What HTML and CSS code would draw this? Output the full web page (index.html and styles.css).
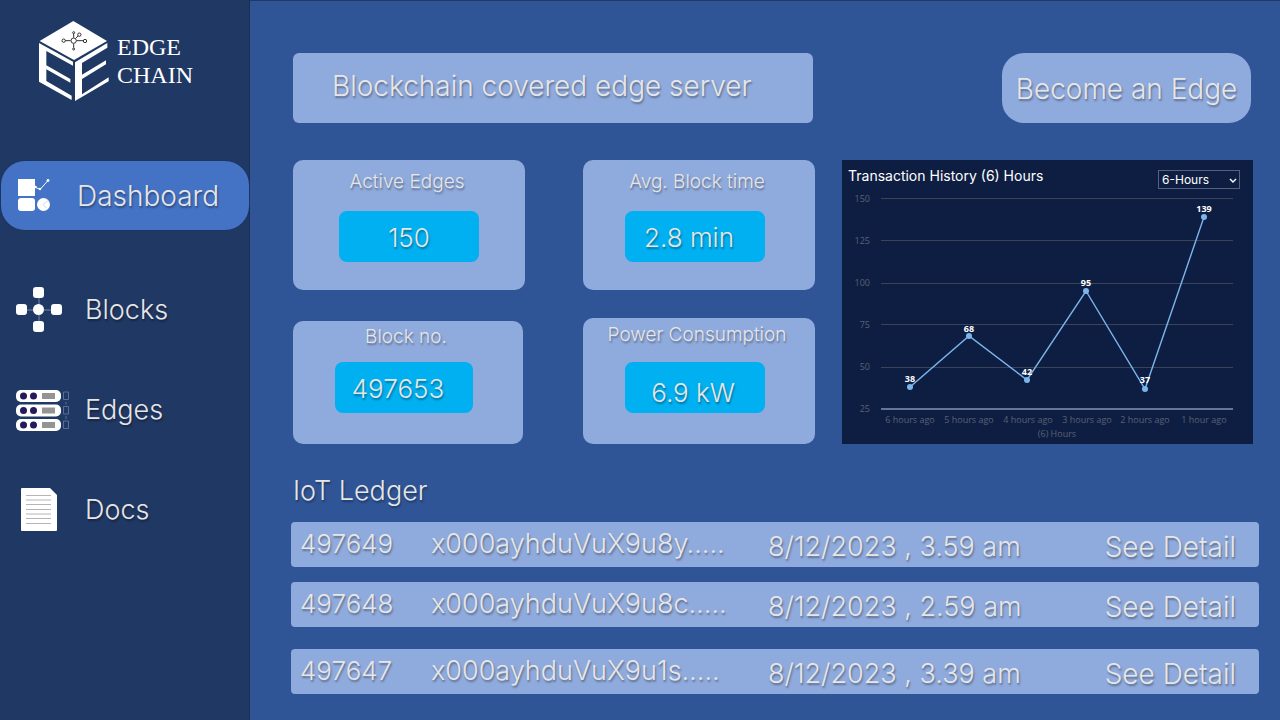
FILE: index.html
```html
<!DOCTYPE html>
<html lang="en">
<head>
<meta charset="utf-8">
<meta name="viewport" content="width=device-width, initial-scale=1">
<title>Edge Chain</title>
<link rel="stylesheet" href="styles.css">
</head>
<body>
<aside class="sidebar">
  <div class="brand">
    <svg class="brand-mark" viewBox="114 60 216 246" aria-hidden="true">
      <g fill="#fff">
        <path d="M220 63L321 123L222 180L119 123Z"/>
        <path d="M117 129L219 185V197L139 153V196L211 237V248L139 208V243L215 287V300L117 245Z"/>
        <path d="M225 187L322 129V143L246 189V224L318 181V193L246 237V283L326 232V244L225 303Z"/>
      </g>
      <g fill="none" stroke="#333" stroke-width="3">
        <path d="M221 101V113M221 131V143M196 122H212M230 122H249M227 115L234 108"/>
        <circle cx="221" cy="122" r="8"/><circle cx="191" cy="122" r="5"/><circle cx="255" cy="123" r="5"/>
        <circle cx="238" cy="104" r="5"/><circle cx="221" cy="98" r="3"/><circle cx="221" cy="147" r="3"/>
      </g>
    </svg>
    <span class="brand-name">EDGE<br>CHAIN</span>
  </div>
  <nav class="nav">
    <a class="nav-item active" href="#dashboard">
      <svg class="icon" viewBox="0 0 60 54" aria-hidden="true">
        <g fill="#fff">
          <rect x="18" y="10" width="17" height="17"/>
          <rect x="18" y="29" width="17" height="13" rx="3"/>
          <circle cx="43.500" cy="35.500" r="6.500"/>
          <circle cx="35.500" cy="18" r="1.300"/><circle cx="40" cy="20" r="1.200"/><circle cx="48" cy="11.500" r="1.400"/>
        </g>
        <path d="M35 18L40 20.500L48 11.500" fill="none" stroke="#fff"/>
        <path d="M48 31.500L43 35.500L46 39" fill="none" stroke="#c3cde0" stroke-width=".7"/>
      </svg>
      <span>Dashboard</span>
    </a>
    <a class="nav-item" href="#blocks">
      <svg class="icon" viewBox="0 0 60 54" aria-hidden="true">
        <path d="M39 10V44M22 27H56" stroke="#7687a5"/>
        <g fill="#fff">
          <rect x="33" y="4" width="11" height="11" rx="3"/><rect x="33" y="38" width="11" height="11" rx="3"/>
          <rect x="16" y="21" width="11" height="11" rx="3"/><rect x="51" y="21" width="11" height="11" rx="3"/>
          <circle cx="38.500" cy="26.500" r="5.500"/>
        </g>
      </svg>
      <span>Blocks</span>
    </a>
    <a class="nav-item" href="#edges">
      <svg class="icon" viewBox="0 0 60 54" aria-hidden="true">
        <g fill="#fff">
          <rect x="16" y="7" width="45" height="12" rx="5"/><rect x="16" y="21.500" width="45" height="12" rx="5"/><rect x="16" y="36" width="45" height="12" rx="5"/>
        </g>
        <g fill="#241a5c">
          <circle cx="23.500" cy="13" r="3.500"/><circle cx="33.500" cy="13" r="3.500"/>
          <circle cx="23.500" cy="27.500" r="3.500"/><circle cx="33.500" cy="27.500" r="3.500"/>
          <circle cx="23.500" cy="42" r="3.500"/><circle cx="33.500" cy="42" r="3.500"/>
        </g>
        <path d="M42 10H55V16H42ZM42 24.500H55V30.500H42ZM42 39H55V45H42Z" fill="#949494"/>
        <path d="M63.500 9H68.500V16.500H63.500ZM63.500 23.500H68.500V31H63.500ZM63.500 38H68.500V45.500H63.500ZM66 19V21.500M66 33V36" fill="none" stroke="#5a6f98"/>
      </svg>
      <span>Edges</span>
    </a>
    <a class="nav-item" href="#docs">
      <svg class="icon" viewBox="0 0 60 54" aria-hidden="true">
        <path d="M22 5H50L57 12V47Q57 48 56 48H22Q21 48 21 47V6Q21 5 22 5Z" fill="#fff"/>
        <path d="M26 12.500H51M26 17H51M26 21.500H51M26 26.500H51M26 31H51M26 35.500H51M26 40.500H51" stroke="#b5b5b5"/>
      </svg>
      <span>Docs</span>
    </a>
  </nav>
</aside>
<main class="main">
  <header class="topbar">
    <h1 class="banner">Blockchain covered edge server</h1>
    <button class="become" type="button">Become an Edge</button>
  </header>
  <section class="overview">
    <div class="stats">
      <article class="card"><h2>Active Edges</h2><p class="value">150</p></article>
      <article class="card"><h2>Avg. Block time</h2><p class="value shifted">2.8 min</p></article>
      <article class="card short narrow"><h2>Block no.</h2><p class="value shifted">497653</p></article>
      <article class="card short"><h2>Power Consumption</h2><p class="value shifted low">6.9 kW</p></article>
    </div>
    <section class="chart">
      <div class="chart-head">
        <h2 id="chart-title">Transaction History (6) Hours</h2>
        <div class="picker">
          <select aria-labelledby="chart-title"><option>6-Hours</option></select>
          <svg viewBox="0 0 8 5" aria-hidden="true"><path d="M1 1L4 4L7 1" fill="none" stroke="#fff" stroke-width="1.400"/></svg>
        </div>
      </div>
      <svg class="plot" viewBox="0 32 411 252" role="img" aria-labelledby="chart-title">
        <path d="M39 38.500H391M39 80.500H391M39 123.500H391M39 164.500H391M39 207.500H391" stroke="#3b4456"/>
        <path d="M39 249H391" stroke="#65749c" stroke-width="2"/>
        <g class="axis" text-anchor="end">
          <text x="28" y="42">150</text><text x="28" y="84">125</text><text x="28" y="126">100</text>
          <text x="28" y="168">75</text><text x="28" y="210">50</text><text x="28" y="252">25</text>
        </g>
        <g class="axis" text-anchor="middle">
          <text x="68" y="263">6 hours ago</text><text x="127" y="263">5 hours ago</text><text x="186" y="263">4 hours ago</text>
          <text x="245" y="263">3 hours ago</text><text x="303" y="263">2 hours ago</text><text x="362" y="263">1 hour ago</text>
          <text x="215" y="277">(6) Hours</text>
        </g>
        <path d="M68 227L127 176L185 220L244 131L303 229L362 57" fill="none" stroke="#7cb5ec" stroke-width="1.400"/>
        <g fill="#7cb5ec">
          <circle cx="68" cy="227" r="3"/><circle cx="127" cy="176" r="3"/><circle cx="185" cy="220" r="3"/>
          <circle cx="244" cy="131" r="3"/><circle cx="303" cy="229" r="3"/><circle cx="362" cy="57" r="3"/>
        </g>
        <g class="points" text-anchor="middle">
          <text x="68" y="222">38</text><text x="127" y="172">68</text><text x="185" y="215">42</text>
          <text x="244" y="126">95</text><text x="303" y="223">37</text><text x="362" y="52">139</text>
        </g>
      </svg>
    </section>
  </section>
  <section class="ledger">
    <h2 class="ledger-title" id="ledger-title">IoT Ledger</h2>
    <table aria-labelledby="ledger-title">
      <tbody>
        <tr><td>497649</td><td>x000ayhduVuX9u8y…..</td><td>8/12/2023 , 3.59 am</td><td><a href="#497649">See Detail</a></td></tr>
        <tr><td>497648</td><td>x000ayhduVuX9u8c…..</td><td>8/12/2023 , 2.59 am</td><td><a href="#497648">See Detail</a></td></tr>
        <tr><td>497647</td><td>x000ayhduVuX9u1s…..</td><td>8/12/2023 , 3.39 am</td><td><a href="#497647">See Detail</a></td></tr>
      </tbody>
    </table>
  </section>
</main>
</body>
</html>
```
FILE: styles.css
```css
* { box-sizing: border-box; }
h1, h2, p { margin: 0; font-weight: inherit; font-size: inherit; }
a { color: inherit; text-decoration: none; }
button, select { font: inherit; color: inherit; }
body {
  margin: 0;
  min-height: 100vh;
  display: grid;
  grid-template-columns: 250px 1fr;
  background: #2f5597;
  color: #e7e6e6;
  font: 300 27px/34px Inter, Lato, sans-serif;
  text-shadow: 1px 2px 2px rgba(0, 0, 0, .35);
}
.sidebar { background: #203864; border-right: 1px solid #1a2e53; }
.brand { display: flex; align-items: center; gap: 7px; padding: 20px 0 0 38px; }
.brand-mark { width: 72px; height: 82px; }
.brand-name {
  font: 400 24px/28px "Liberation Serif", serif;
  color: #fff;
  text-shadow: none;
}
.nav { display: flex; flex-direction: column; gap: 46px; margin-top: 59px; }
.nav-item { display: flex; align-items: center; height: 54px; gap: 25px; }
.icon { width: 60px; height: 54px; overflow: visible; flex: none; }
.nav-item.active {
  height: 69px;
  margin: 0 0 7px 1px;
  gap: 17px;
  background: #4472c4;
  border-radius: 24px;
  box-shadow: 0 0 0 1px #1d3561;
  font-size: 28px;
}
.nav-item.active .icon { margin-left: -1px; }
.main { min-width: 0; padding: 52px 21px 26px 41px; border-top: 1px solid #203864; }
.topbar { display: flex; justify-content: space-between; padding: 0 8px 0 2px; font-size: 28px; }
.banner {
  width: 520px;
  height: 70px;
  padding: 16px 39px;
  border-radius: 6px;
  background: #8faadc;
  white-space: nowrap;
}
.become {
  width: 249px;
  height: 70px;
  padding: 2px 0 0;
  border: 0;
  border-radius: 22px;
  background: #8faadc;
  text-shadow: inherit;
}
.overview { display: flex; gap: 27px; margin-top: 37px; padding: 0 6px 0 2px; }
.stats {
  flex: 522 1 0;
  display: grid;
  grid-template-columns: 1fr 1fr;
  grid-template-rows: 130px 126px;
  column-gap: 58px;
  row-gap: 28px;
}
.card {
  display: flex;
  flex-direction: column;
  align-items: center;
  padding-top: 9px;
  gap: 16px;
  border-radius: 10px;
  background: #8faadc;
  text-align: center;
}
.card h2 { margin-right: 4px; font-size: 19px; line-height: 26px; white-space: nowrap; }
.value { width: 60%; min-width: 138px; height: 51px; padding-top: 10px; border-radius: 8px; background: #00b0f0; font-size: 26px; }
.value.shifted { margin-right: 8px; padding-right: 12px; }
.value.low { padding-top: 14px; padding-right: 4px; }
.card.short { padding-top: 4px; gap: 14px; }
.card.narrow { margin: 3px 2px 0 0; padding-top: 3px; gap: 12px; }
.chart {
  flex: 411 1 0;
  background: #0e1e42;
  color: #fff;
  font-family: Inter, sans-serif;
  font-weight: 400;
  text-shadow: none;
}
.chart-head { display: flex; justify-content: space-between; height: 32px; padding: 6px 13px 0 6px; }
.chart-head h2 { font-size: 14px; line-height: 20px; white-space: nowrap; }
.picker { position: relative; height: 19px; margin-top: 4px; }
.picker select {
  appearance: none;
  display: block;
  width: 82px;
  height: 19px;
  padding: 0 3px;
  border: 1px solid #56617c;
  border-radius: 0;
  background: #0e1e42;
  font-size: 12px;
  line-height: 17px;
}
.picker svg { position: absolute; right: 3px; top: 8px; width: 8px; height: 5px; pointer-events: none; }
.plot { display: block; width: 100%; font-family: "Open Sans", sans-serif; }
.axis { fill: #596174; font-size: 9px; }
.points { fill: #fff; font-size: 9px; font-weight: 700; }
.ledger { margin-top: 30px; }
.ledger-title { padding-left: 2px; }
.ledger table { display: block; margin-top: 14px; }
.ledger tbody { display: flex; flex-direction: column; gap: 15px; }
.ledger tr {
  display: grid;
  grid-template-columns: 131px 337px 1fr auto;
  height: 45px;
  padding: 5px 23px 0 9px;
  border-radius: 4px;
  background: #8faadc;
}
.ledger tr:last-child { margin-top: 7px; }
.ledger td { padding: 0; white-space: nowrap; }
.ledger td:first-child { font-size: 26px; }
.ledger td:nth-child(n+3) { padding-top: 3px; }
.ledger td:last-child { font-size: 28px; }
```
